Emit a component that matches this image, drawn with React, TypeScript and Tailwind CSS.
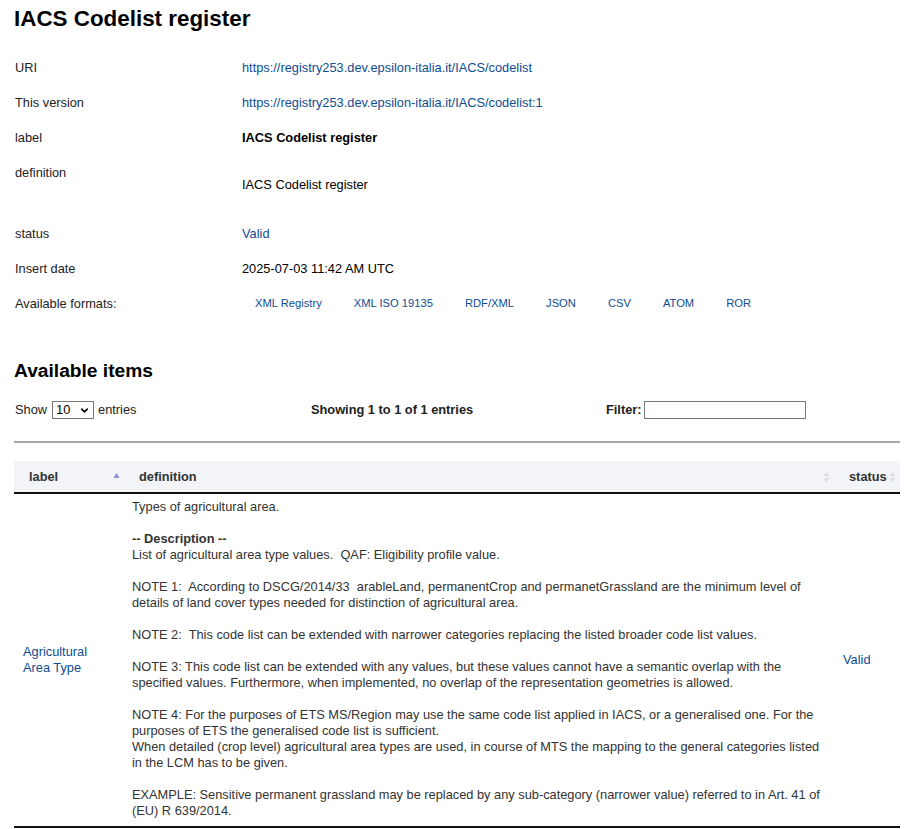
import { ChevronDown } from "lucide-react";

const meta = [
  { k: "URI", v: "https://registry253.dev.epsilon-italia.it/IACS/codelist", link: true },
  { k: "This version", v: "https://registry253.dev.epsilon-italia.it/IACS/codelist:1", link: true },
];

const formats = ["XML Registry", "XML ISO 19135", "RDF/XML", "JSON", "CSV", "ATOM", "ROR"];

function SortBoth() {
  return (
    <svg width="7" height="12" viewBox="0 0 7 12" className="inline-block">
      <path d="M3.5 1 L6.5 5 L0.5 5 Z" fill="#d9dde3" />
      <path d="M3.5 11 L6.5 7 L0.5 7 Z" fill="#d9dde3" />
    </svg>
  );
}

function SortAsc() {
  return (
    <svg width="7" height="12" viewBox="0 0 7 12" className="inline-block">
      <path d="M3.5 2 L6.5 7 L0.5 7 Z" fill="#8a8fd6" />
    </svg>
  );
}

export default function App() {
  return (
    <div
      className="min-h-screen bg-white px-[14px] text-[12.8px] text-[#222]"
      style={{ fontFamily: '"Liberation Sans", Arial, sans-serif' }}
    >
      <h1 className="pt-[6px] text-[22.4px] font-bold leading-[26px] text-black">IACS Codelist register</h1>

      <div className="mt-[18px]">
        {meta.map((m) => (
          <div key={m.k} className="flex h-[35px] items-center">
            <div className="w-[228px] pl-px">{m.k}</div>
            <a className="text-[#0f4c92]">{m.v}</a>
          </div>
        ))}
        <div className="flex h-[36px] items-center">
          <div className="w-[228px] pl-px">label</div>
          <div className="font-bold text-black">IACS Codelist register</div>
        </div>
        <div className="flex h-[60px] items-start">
          <div className="w-[228px] pl-px pt-[9px] leading-[16px]">definition</div>
          <div className="pt-[21px] leading-[16px] text-black">IACS Codelist register</div>
        </div>
        <div className="flex h-[35px] items-center">
          <div className="w-[228px] pl-px">status</div>
          <a className="text-[#0f4c92]">Valid</a>
        </div>
        <div className="flex h-[36px] items-center">
          <div className="w-[228px] pl-px">Insert date</div>
          <div className="text-black">2025-07-03 11:42 AM UTC</div>
        </div>
        <div className="flex h-[33px] items-center">
          <div className="w-[228px] pl-px">Available formats:</div>
          <div className="flex gap-[32px] pl-[13px] text-[11.2px] text-[#0f4c92]">
            {formats.map((f) => (
              <a key={f}>{f}</a>
            ))}
          </div>
        </div>
      </div>

      <h2 className="mt-[40px] text-[19.2px] font-bold leading-[22px] text-black">Available items</h2>

      <div className="mt-[18px] flex h-[20px] items-center">
        <div className="flex w-[297px] items-center pl-px">
          <span>Show</span>
          <span className="ml-[5px] flex h-[18px] w-[42px] items-center justify-between border border-[#767676] pl-[3px] pr-[3px] text-black">
            10
            <ChevronDown size={11} strokeWidth={3.5} />
          </span>
          <span className="ml-[4px]">entries</span>
        </div>
        <div className="w-[295px] font-bold">Showing 1 to 1 of 1 entries</div>
        <div className="flex items-center font-bold">
          Filter:
          <input className="ml-[2px] h-[18px] w-[162px] border border-[#767676] outline-none" />
        </div>
      </div>

      <div className="mt-[21px] h-[2px] w-[886px] bg-[#a8a8a8]" />

      <table className="mt-[18px] w-[886px] border-collapse">
        <thead>
          <tr className="h-[32px] border-b-[2px] border-[#111] bg-[#f2f4f8] font-bold text-[#333]">
            <th className="w-[110px] pl-[15px] pr-[4px] text-left font-bold">
              <div className="flex items-center justify-between">
                label
                <SortAsc />
              </div>
            </th>
            <th className="w-[710px] pl-[15px] pr-[4px] text-left font-bold">
              <div className="flex items-center justify-between">
                definition
                <SortBoth />
              </div>
            </th>
            <th className="pl-[15px] text-left font-bold">
              <div className="flex items-center gap-[2px]">
                status
                <SortBoth />
              </div>
            </th>
          </tr>
        </thead>
        <tbody>
          <tr className="border-b-[2px] border-[#111] align-middle">
            <td className="pl-[9px] leading-[16px] text-[#0f4c92]">
              Agricultural
              <br />
              Area Type
            </td>
            <td className="pb-[7px] pl-[8px] pt-[5px] leading-[16px] whitespace-pre text-[#333]">
              {"Types of agricultural area.\n\n"}
              <b>-- Description --</b>
              {"\nList of agricultural area type values.  QAF: Eligibility profile value.\n\n" +
                "NOTE 1:  According to DSCG/2014/33  arableLand, permanentCrop and permanetGrassland are the minimum level of\n" +
                "details of land cover types needed for distinction of agricultural area.\n\n" +
                "NOTE 2:  This code list can be extended with narrower categories replacing the listed broader code list values.\n\n" +
                "NOTE 3: This code list can be extended with any values, but these values cannot have a semantic overlap with the\n" +
                "specified values. Furthermore, when implemented, no overlap of the representation geometries is allowed.\n\n" +
                "NOTE 4: For the purposes of ETS MS/Region may use the same code list applied in IACS, or a generalised one. For the\n" +
                "purposes of ETS the generalised code list is sufficient.\n" +
                "When detailed (crop level) agricultural area types are used, in course of MTS the mapping to the general categories listed\n" +
                "in the LCM has to be given.\n\n" +
                "EXAMPLE: Sensitive permanent grassland may be replaced by any sub-category (narrower value) referred to in Art. 41 of\n" +
                "(EU) R 639/2014."}
            </td>
            <td className="pl-[9px] text-[#0f4c92]">Valid</td>
          </tr>
        </tbody>
      </table>
    </div>
  );
}
